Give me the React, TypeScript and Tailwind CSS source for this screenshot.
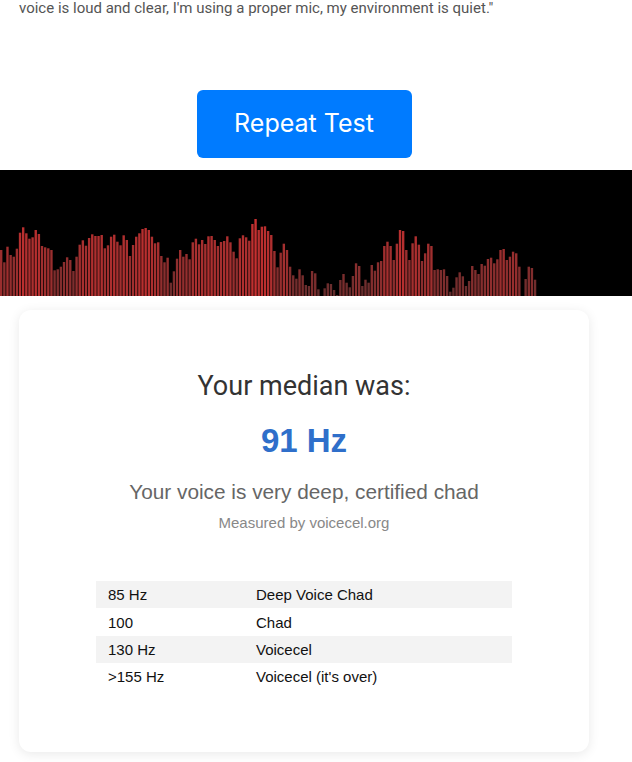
import React from "react";

const RAW: number[] = [
  46, 33.7, 49.3, 41, 39.3, 47.3, 63.3, 68.7, 62.7, 57.3, 58.7, 66, 62, 50, 48.7, 47.7, 46, 25.7, 26.7, 29.3, 34, 38.7, 36, 25, 39.3, 51.3, 55.7, 50.3, 58, 61.7, 60, 60, 61, 47.7, 50.7, 59.3, 61.3,
  54.3, 50.7, 60.7, 56, 40, 51, 59.3, 62.7, 67, 68, 66, 59.3, 52.7, 53.7, 40, 33.7, 38.3, 13.3, 24.7, 37.3, 46, 39.3, 42, 36.7, 53.7, 57.3, 51.7, 56, 52, 59.7, 60, 56, 50, 54,
  55, 59.7, 53.7, 44.3, 37.7, 57.7, 60.7, 58.7, 55.3, 72, 77, 66, 69.3, 69.7, 65, 61, 45, 28.7, 43.3, 52.3, 46, 29.3, 20.7, 17.3, 26.7, 20.7, 11, 10, 25, 22.7, 6.7, 0, 7.7, 12.7,
  12, 6, 1, 16, 22, 13.3, 8.7, 20, 32.7, 30, 10, 16.3, 13.3, 31, 25.3, 33.7, 35, 50, 54.3, 50, 36, 52.3, 66, 65, 46, 36, 52.7, 59.7, 51.3, 35, 42.7, 52.3, 50, 26,
  26.7, 26, 26.7, 20, 4.3, 8.3, 18.7, 23.7, 19.7, 10, 15, 30, 26, 22, 32, 30.3, 37, 38.3, 32.7, 36.7, 46, 47, 36, 39.3, 44.3, 42.7, 29.3, 0, 17, 29.3, 28, 16.3,
];

const PITCH = 537 / RAW.length;

function Waveform() {
  return (
    <div className="w-[632px] h-[126px] bg-black">
      <svg width="632" height="126" viewBox="0 0 632 126">
        {RAW.map((h, i) => {
          if (h <= 0) return null;
          const r = Math.min(210, Math.round(90 + h * 1.4));
          const g = Math.round(44 + h * 0.05);
          return (
            <rect
              key={i}
              x={i * PITCH}
              y={126 - h}
              width={2.4}
              height={h}
              fill={`rgb(${r},${g},${g})`}
            />
          );
        })}
      </svg>
    </div>
  );
}

const rows: [string, string][] = [
  ["85 Hz", "Deep Voice Chad"],
  ["100", "Chad"],
  ["130 Hz", "Voicecel"],
  [">155 Hz", "Voicecel (it's over)"],
];

export default function App() {
  return (
    <div className="w-[632px] h-[762px] overflow-hidden bg-white">
      <div className="w-[608px] px-[19px]">
        <p
          className="-mt-[4px] text-[15px] leading-6 text-[#555] whitespace-nowrap"
          style={{ fontFamily: "Roboto, sans-serif" }}
        >
          voice is loud and clear, I'm using a proper mic, my environment is quiet."
        </p>
        <button
          className="mt-[70px] mx-auto flex items-center justify-center w-[215px] h-[68px] rounded-[6px] bg-[#007bff] text-white text-[25px]"
          style={{ fontFamily: "Inter, sans-serif" }}
        >
          Repeat Test
        </button>
      </div>
      <div className="mt-[12px]">
        <Waveform />
      </div>
      <div className="w-[608px] px-[19px] mt-[14px]">
        <div className="rounded-[12px] bg-white shadow-[0_2px_12px_rgba(0,0,0,0.09)] pt-[60px] pb-[62px] flex flex-col items-center">
          <div
            className="text-[27px] leading-[32px] text-[#333]"
            style={{ fontFamily: "Roboto, sans-serif" }}
          >
            Your median was:
          </div>
          <div
            className="mt-[20px] text-[33px] leading-[37px] font-bold text-[#2f6fca]"
            style={{ fontFamily: "'Liberation Sans', Arial, sans-serif" }}
          >
            91 Hz
          </div>
          <div
            className="mt-[21px] text-[20.8px] leading-[24px] text-[#666]"
            style={{ fontFamily: "'Liberation Sans', Arial, sans-serif" }}
          >
            Your voice is very deep, certified chad
          </div>
          <div
            className="mt-[10px] text-[15px] leading-[18px] text-[#888]"
            style={{ fontFamily: "'Liberation Sans', Arial, sans-serif" }}
          >
            Measured by voicecel.org
          </div>
          <table
            className="mt-[49px] w-[416px] border-collapse text-[15px] leading-[17px] text-[#111]"
            style={{ fontFamily: "'Liberation Sans', Arial, sans-serif" }}
          >
            <tbody>
              {rows.map(([a, b], i) => (
                <tr
                  key={i}
                  className={`${i % 2 === 0 ? "bg-[#f3f3f3]" : "bg-white"} ${i === 1 ? "h-[28px]" : "h-[27px]"}`}
                >
                  <td className="w-[148px] pl-[12px] py-0 align-middle">{a}</td>
                  <td className="pl-[12px] py-0 align-middle">{b}</td>
                </tr>
              ))}
            </tbody>
          </table>
        </div>
      </div>
    </div>
  );
}
